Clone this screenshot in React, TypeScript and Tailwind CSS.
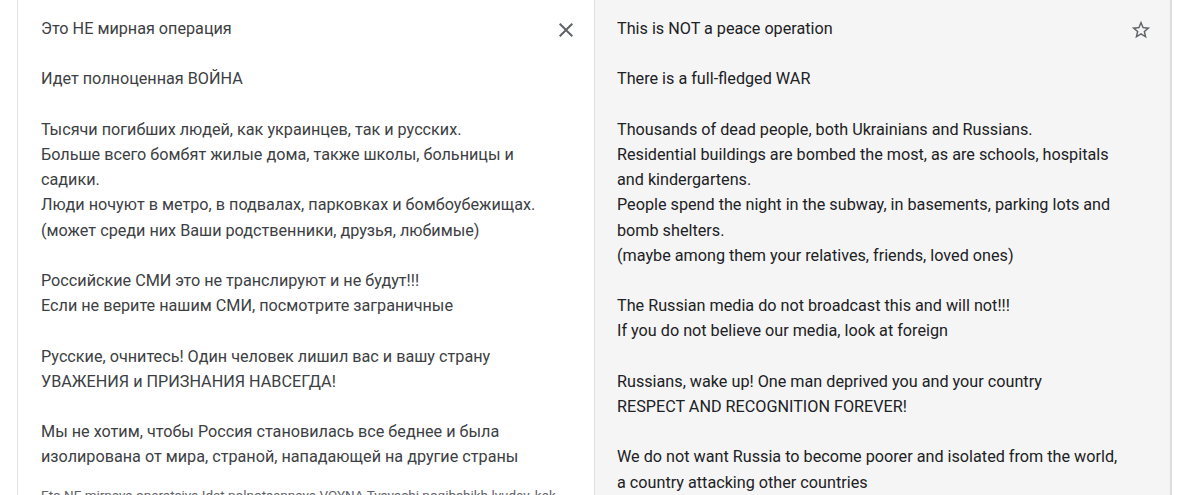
import React from "react";

const src = `Это НЕ мирная операция

Идет полноценная ВОЙНА

Тысячи погибших людей, как украинцев, так и русских.
Больше всего бомбят жилые дома, также школы, больницы и садики.
Люди ночуют в метро, в подвалах, парковках и бомбоубежищах.
(может среди них Ваши родственники, друзья, любимые)

Российские СМИ это не транслируют и не будут!!!
Если не верите нашим СМИ, посмотрите заграничные

Русские, очнитесь! Один человек лишил вас и вашу страну
УВАЖЕНИЯ и ПРИЗНАНИЯ НАВСЕГДА!

Мы не хотим, чтобы Россия становилась все беднее и была изолирована от мира, страной, нападающей на другие страны`;

const dst = `This is NOT a peace operation

There is a full-fledged WAR

Thousands of dead people, both Ukrainians and Russians.
Residential buildings are bombed the most, as are schools, hospitals and kindergartens.
People spend the night in the subway, in basements, parking lots and bomb shelters.
(maybe among them your relatives, friends, loved ones)

The Russian media do not broadcast this and will not!!!
If you do not believe our media, look at foreign

Russians, wake up! One man deprived you and your country
RESPECT AND RECOGNITION FOREVER!

We do not want Russia to become poorer and isolated from the world, a country attacking other countries`;

export default function App() {
  return (
    <div
      className="w-[1184px] h-[495px] overflow-hidden bg-white pl-[17px]"
      style={{ fontFamily: "Roboto, 'Noto Sans', sans-serif" }}
    >
      <div className="flex w-[1155px] h-full border-l border-l-[#e3e3e3] border-r-2 border-r-[#dcdcdc]">
        <div className="relative w-[577px] bg-white border-r border-r-[#e0e0e0] pt-[16px] pl-[23px]">
          <div className="whitespace-pre-wrap text-[16.2px] leading-[25.2px] text-[#3c4043] w-[505px]">
            {src}
          </div>
          <div className="mt-[15px] text-[13.5px] leading-[20px] text-[#5f6368] whitespace-nowrap">
            Eto NE mirnaya operatsiya Idet polnotsennaya VOYNA Tysyachi pogibshikh lyudey, kak
          </div>
          <button className="absolute top-[18px] left-[536px] w-6 h-6 flex items-center justify-center text-[#5f6368]">
            <svg width="24" height="24" viewBox="0 0 24 24" fill="currentColor">
              <path d="M19 6.41 17.59 5 12 10.59 6.41 5 5 6.41 10.59 12 5 17.59 6.41 19 12 13.41 17.59 19 19 17.59 13.41 12z" />
            </svg>
          </button>
        </div>
        <div className="relative flex-1 bg-[#f5f5f5] pt-[16px] pl-[22px]">
          <div className="whitespace-pre-wrap text-[16.2px] leading-[25.2px] text-[#202124] w-[503px]">
            {dst}
          </div>
          <button className="absolute top-[18px] right-[17px] w-6 h-6 flex items-center justify-center text-[#5f6368]">
            <svg width="22" height="22" viewBox="0 0 24 24" fill="currentColor">
              <path d="M22 9.24l-7.19-.62L12 2 9.19 8.63 2 9.24l5.46 4.73L5.82 21 12 17.27 18.18 21l-1.63-7.03L22 9.24zM12 15.4l-3.76 2.27 1-4.28-3.32-2.88 4.38-.38L12 6.1l1.71 4.04 4.38.38-3.32 2.88 1 4.28L12 15.4z" />
            </svg>
          </button>
        </div>
      </div>
    </div>
  );
}
